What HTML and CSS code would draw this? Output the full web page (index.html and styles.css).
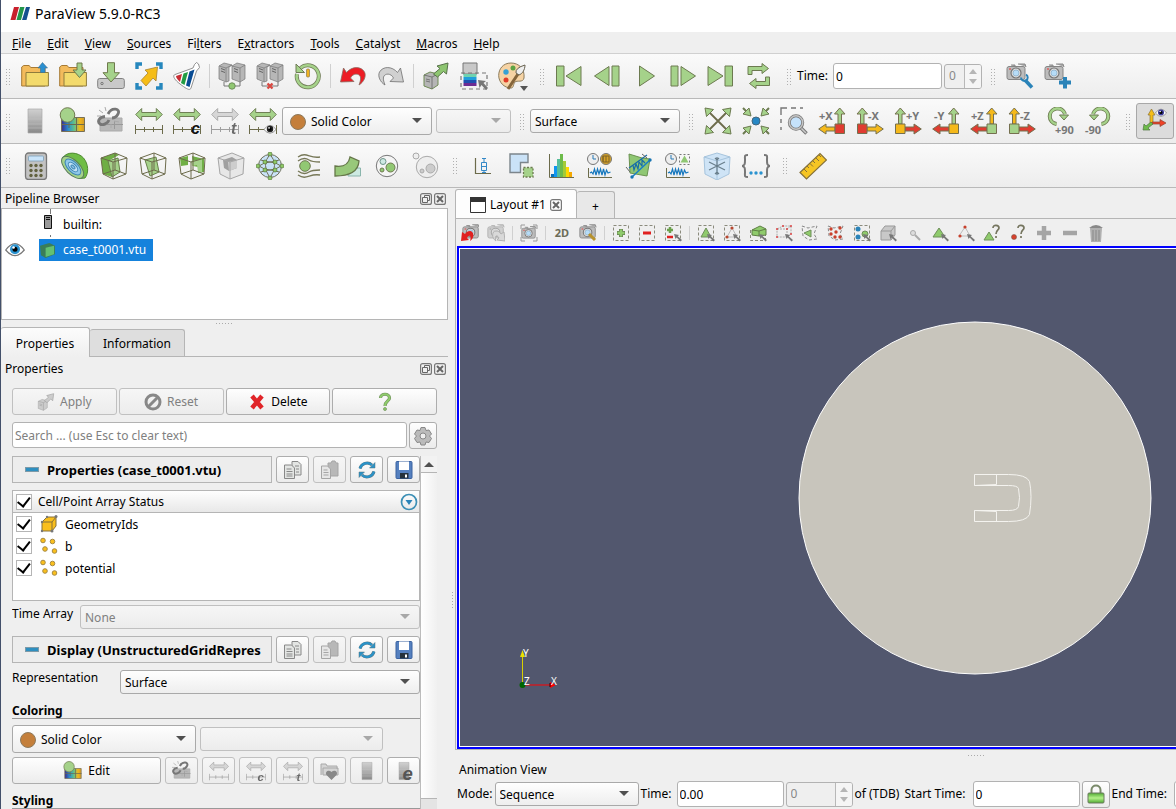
FILE: index.html
```html
<!DOCTYPE html>
<html lang="en">
<head>
<meta charset="utf-8">
<title>ParaView 5.9.0-RC3</title>
<link rel="stylesheet" href="styles.css">
</head>
<body>
<svg class="defs" aria-hidden="true">
<defs>
<linearGradient id="rainbow"><stop offset="0" stop-color="#3b2a8c"/><stop offset=".3" stop-color="#2c8fd0"/><stop offset=".55" stop-color="#5fc08a"/><stop offset=".8" stop-color="#f2b71c"/><stop offset="1" stop-color="#cf9a2a"/></linearGradient>
<linearGradient id="silver" x2="0" y2="1"><stop offset="0" stop-color="#d0d0d0"/><stop offset=".5" stop-color="#b0b0b0"/><stop offset="1" stop-color="#888"/></linearGradient>
<linearGradient id="lockfill" x2="0" y2="1"><stop offset="0" stop-color="#4faa32"/><stop offset=".5" stop-color="#b4f08a"/><stop offset="1" stop-color="#4faa32"/></linearGradient>
</defs>
<symbol id="open" viewBox="0 0 28 28"><path d="M.7 24V5l2-1.500h5.500l1.500 2H24V24z" fill="#f3bb5c" stroke="#a67a35"/><path d="M5 24V10.500h22.400V24z" fill="#f3da6c" stroke="#8f7c3c"/><path d="M21.500.500 17 6h2.500v4.500h4.500V6h2.500z" fill="#2a8fd0" stroke="#3f6f8f" stroke-width=".6"/></symbol>
<symbol id="openin" viewBox="0 0 28 28"><path d="M.7 24V5l2-1.500h5.500l1.500 2H24V24z" fill="#f3bb5c" stroke="#a67a35"/><path d="M5 24V10.500h22.400V24z" fill="#f3da6c" stroke="#8f7c3c"/><path d="M18 1h5v7h4l-6.500 7.500L14 8h4z" fill="#a5d28a" stroke="#6f7a4d"/></symbol>
<symbol id="save" viewBox="0 0 28 28"><rect x=".7" y="16.500" width="26.600" height="10" rx="2" fill="#c9c9c9" stroke="#808080"/><circle cx="5" cy="21.500" r="1.200" fill="none" stroke="#777"/><path d="M10.500.700h7v10h5L14 20 6 10.700h4.500z" fill="#a5d28a" stroke="#6f7a4d"/></symbol>
<symbol id="select" viewBox="0 0 28 28"><path d="M2 7V2h5M21 2h5v5M26 21v5h-5M7 26H2v-5" fill="none" stroke="#2687bd" stroke-width="3.400"/><path d="M22.500 5 10 8l3 3-7 7.500L11 24l7-8 3 3z" fill="#f5bd18" stroke="#a8822e" stroke-width=".8"/></symbol>
<symbol id="flask" viewBox="0 0 28 28"><path d="M20 6 2 12.500c-2.500 1-1.500 4.500 5 9.500s10 7 11 4L23.500 9l3-3.500-1-3.500-2-1.500-2 2z" fill="#fff" stroke="#777" stroke-width=".8"/><path d="m3 14 6-2-2 8c-2-2-4-4-4-6z" fill="#c82d34"/><path d="m10.500 11.500 4.500-1.500-3.500 13-3.500-2z" fill="#239c43"/><path d="m16.500 9.500 5-2L16.500 25l-3.500-1.500z" fill="#084b93"/></symbol>
<symbol id="server" viewBox="0 0 28 28"><g fill="#b7b7b7" stroke="#777" stroke-width=".7"><path d="m1 4 5-3 8 2-3 2v14l-3 1-7-3z"/><path d="m1 4 7 2v14M8 6l6-3"/><path d="m14 4 5-3 8 2v14l-5 3-8-3zM14 4l8 2v14M22 6l5-3"/></g><path d="M3 6.500 7 8M3 9l4 1.500M16 6.500 20 8M16 9l4 1.500" stroke="#666"/><path d="M6 20v4h16v-4" fill="none" stroke="#777"/></symbol>
<symbol id="clock" viewBox="0 0 28 28"><path d="M6.500 6a11 11 0 1 1-3.500 6" fill="none" stroke="#6f7a55" stroke-width="4"/><path d="M6.500 6a11 11 0 1 1-3.500 6" fill="none" stroke="#a5d28a" stroke-width="2.600"/><path d="M2 2v8.500h8.500z" fill="#a5d28a" stroke="#6f7a55"/><rect x="12.500" y="7" width="3" height="8" rx="1" fill="#f0b222" stroke="#8a7a4a" stroke-width=".7"/></symbol>
<symbol id="undo" viewBox="0 0 28 28"><path d="M4.500 6 1.500 20l13.500-.5-3.500-3.500C14 11 20 11 21.500 15c.5 3-.5 5-1.500 8 5-3 7.500-9 5.500-13C22 4 13 4 7.500 10.500z" fill="var(--f,#ed1c24)" stroke="#8a6a60" stroke-width=".8"/></symbol>
<symbol id="box" viewBox="0 0 28 28"><path d="m2 13 6-3 8 2v11l-6 4-8-3z" fill="#b5b5b5" stroke="#6f8a55"/><path d="m2 13 8 2v12M10 15l6-3M4 17l4 1M4 19l4 1" fill="none" stroke="#666" stroke-width=".8"/><path d="M26 1 15 4l3 2.500L11.500 12l4 3 6-5.500 3 2.500z" fill="#8ec571" stroke="#58724a"/></symbol>
<symbol id="selcolor" viewBox="0 0 28 28"><path d="M3 1h14v11H3z" fill="#c8c8c8" stroke="#777"/><path d="M3.500 12h13v3h-13z" fill="#6fd3b0"/><path d="M3.500 15h13v3h-13z" fill="#209edb"/><path d="M3.500 18h13v3h-13z" fill="#1c50b0"/><path d="M3.500 21h13v3h-13z" fill="#6c2b92"/><path d="M1 11h26v16H1z" fill="none" stroke="#777" stroke-width="1.200" stroke-dasharray="4 3"/><path d="m18 18 8 1-2.500 2L28 26l-2 2-4.500-5-2 3z" fill="#777"/></symbol>
<symbol id="palette" viewBox="0 0 28 28"><path d="M13 1C5 1 .7 7 .7 13.500S6 26 13 26c3 0 2-4 4-6s8 1 9-4C27 7 21 1 13 1z" fill="#f6d3a4" stroke="#8b7b5c"/><circle cx="15" cy="6" r="2.500" fill="#5da344"/><circle cx="8" cy="10" r="2.700" fill="#36a1d5"/><circle cx="8" cy="18" r="2.500" fill="#e03c28"/><path d="M10 27 22 9" stroke="#85653b" stroke-width="3"/><path d="M18 11q-1-5 9-8c0 5-3 9-6 10z" fill="#eee" stroke="#66604e"/></symbol>
<symbol id="first" viewBox="0 0 28 28"><path d="M1.500 4H9v20H1.500zM11 14 26 4.500v19z" fill="#a5d28a" stroke="#6c7a50"/></symbol>
<symbol id="prev" viewBox="0 0 28 28"><path d="M19 4h7v20h-7zM1.500 14 16 4.500v19z" fill="#a5d28a" stroke="#6c7a50"/></symbol>
<symbol id="play" viewBox="0 0 28 28"><path d="m8.500 4 15 10-15 10z" fill="#a5d28a" stroke="#6c7a50"/></symbol>
<symbol id="loop" viewBox="0 0 28 28"><path d="M3 12.500V4.500h14v-3l6.500 5-6.500 5v-3H7v4zM24.500 15v8.500H11v3l-6.500-5 6.500-5v3h9.500V15z" fill="#a5d28a" stroke="#6c7a50"/></symbol>
<symbol id="camera" viewBox="0 0 28 28"><path d="M5 3h4v2M12 2h7l1 3" fill="#aaa" stroke="#888"/><rect x="1" y="4.500" width="18" height="13" rx="2" fill="#bcbcbc" stroke="#858585"/><circle cx="10" cy="11" r="5" fill="#ddd" stroke="#777" stroke-width="1.200"/><circle cx="10" cy="11" r="3" fill="#b6dcf7" stroke="#7da2bd" stroke-width=".6"/><path d="M3 7h2" stroke="#e33"/></symbol>
<symbol id="bar" viewBox="0 0 28 28"><path d="M7 2h14v24H7z" fill="url(#silver)" stroke="#aaa" stroke-width=".7"/><path d="M7 12h14M7 17h14M7 21h14" stroke="#c5c5c5" stroke-width=".5"/></symbol>
<symbol id="cmap" viewBox="0 0 28 28"><path d="M2.500 10.500h23v14h-23z" fill="url(#rainbow)" stroke="#777056"/><path d="M3 17.500h23M10 14v7M17.500 11v13" stroke="#6b6a50"/><circle cx="8.500" cy="8" r="7.300" fill="#a5d28a" stroke="#6f7a50"/></symbol>
<symbol id="chain" viewBox="0 0 28 28"><path d="M3 11h22v13H3z" fill="#b8b8b8" stroke="#aaa"/><path d="M10 17.500h16M17.500 14v8" stroke="#999"/><path d="m2 3 4 3M8 0l1 4M0 9h4M17 14l5 1M14 17v4" stroke="#aaa"/><path d="M11 7c4-8 13-5 10 0-1 2-3 4-6 4M8 9.500c-6 .5-8 5-5 7.500 3 2 8-1 9-4" fill="none" stroke="#777" stroke-width="2.800"/></symbol>
<symbol id="range" viewBox="0 0 28 28"><path d="m.7 7.500 6-6v4h14.600v-4l6 6-6 6v-4H6.700v4z" fill="#a5d28a" stroke="#6f8055"/><path d="M.5 18v9M27.500 18v9M9.500 20v5M18.500 20v5M.5 22.500h27" fill="none" stroke="#6c6b4b"/></symbol>
<symbol id="eye" viewBox="0 0 28 28"><path d="M1 14q13-18 26 0-13 16-26 0z" fill="#fff" stroke="#777" stroke-width="1.700"/><circle cx="14" cy="13" r="7" fill="var(--iris,#222)"/><circle cx="14" cy="13" r="3.500" fill="#000"/><circle cx="12" cy="10.500" r="1.800" fill="#fff"/></symbol>
<symbol id="expand" viewBox="0 0 28 28"><path d="m4 4 20 20M24 4 4 24" stroke="#6c6b4b" stroke-width="1.800"/><path d="m1 1 8.500 1.500-7 7zM27 1l-8.500 1.500 7 7zM1 27l8.500-1.500-7-7zM27 27l-8.500-1.500 7-7z" fill="#a5d28a" stroke="#6c7a50"/></symbol>
<symbol id="shrink" viewBox="0 0 28 28"><path d="m1 1 4 4M27 1l-4 4M1 27l4-4M27 27l-4-4" stroke="#6c7a50" stroke-width="2"/><path d="M9 9 7 1 1 7zM19 9l2-8 6 6zM9 19l-2 8-6-6zM19 19l2 8 6-6z" fill="#a5d28a" stroke="#6c7a50"/><circle cx="14" cy="14" r="4" fill="#2687c4" stroke="#44667c"/></symbol>
<symbol id="zoombox" viewBox="0 0 28 28"><path d="M1 23v-3M1 16v-4M1 8V1h6M11 1h5M20 1h3" fill="none" stroke="#777" stroke-width="1.400"/><path d="m20 20 6.500 6.500" stroke="#777" stroke-width="3.500"/><path d="m20 20 6 6" stroke="#ccc" stroke-width="1.500"/><circle cx="16" cy="15.500" r="6.700" fill="#c5e2fb" stroke="#777" stroke-width="3"/><circle cx="16" cy="15.500" r="6.700" fill="none" stroke="#c5c5c5" stroke-width="1.500"/></symbol>
<symbol id="axes" viewBox="0 0 28 28"><path d="M20 17V7h-3.500L21.700 1 27 7h-3.500v10z" fill="var(--u)" stroke="#75704f"/><path d="M17 20H8v-3L.7 22 8 27v-3h9z" fill="var(--s)" stroke="#75704f"/><path d="M17 17h9.500v9.500H17z" fill="var(--b)" stroke="#75704f"/></symbol>
<symbol id="rotate" viewBox="0 0 28 28"><path d="M10.500 17A7.800 7.800 0 1 1 19 7" fill="none" stroke="#6c7a50" stroke-width="4"/><path d="M10.500 17A7.800 7.800 0 1 1 19 7" fill="none" stroke="#a5d28a" stroke-width="2.400"/><path d="M13.500 8h9L18 13z" fill="#a5d28a" stroke="#6c7a50"/></symbol>
<symbol id="triad" viewBox="0 0 28 28"><path d="M9 17V8H7l3.500-6L14 8h-2v9z" fill="#f5bd18" stroke="#8b7237" stroke-width=".7"/><path d="M11 15h8v-2.500l6 3.500-6 3.500V17h-8z" fill="#ef4126" stroke="#8b4637" stroke-width=".7"/><path d="m12 17-5 4 2 2H2l1-6 2 2 5-4z" fill="#6dbb4a" stroke="#507540" stroke-width=".7"/></symbol>
<symbol id="calc" viewBox="0 0 28 28"><rect x="3.500" y="1" width="21" height="26.500" rx="3" fill="#c2c2c2" stroke="#777" stroke-width="1.300"/><rect x="6.500" y="4" width="15" height="5" rx="1" fill="#c9e4fa" stroke="#7da0b8" stroke-width=".8"/><g fill="#62623f"><circle cx="9" cy="13.500" r="1.700"/><circle cx="14" cy="13.500" r="1.700"/><circle cx="19" cy="13.500" r="1.700"/><circle cx="9" cy="18.500" r="1.700"/><circle cx="14" cy="18.500" r="1.700"/><circle cx="19" cy="18.500" r="1.700"/><circle cx="9" cy="23.500" r="1.700"/><circle cx="14" cy="23.500" r="1.700"/><circle cx="19" cy="23.500" r="1.700"/></g></symbol>
<symbol id="contour" viewBox="0 0 28 28"><path d="M1.500 6C6-1 17 0 22.500 6c5 6 5.500 15 1.500 20l-5 .5z" fill="#6fbd45" stroke="#4f8a32"/><g transform="rotate(45 12 15)" stroke="#577a5a"><ellipse cx="12" cy="15.500" rx="14" ry="7" fill="#a5d28a"/><ellipse cx="12" cy="15" rx="10" ry="5" fill="#8fc8ea" stroke="#3f88b5"/><ellipse cx="12" cy="15" rx="6" ry="3" fill="#c3e2f6" stroke="#3f88b5"/><ellipse cx="12" cy="15" rx="2.500" ry="1.200" fill="#8fc5e8" stroke="#3f88b5"/></g></symbol>
<symbol id="cube" viewBox="0 0 28 28"><g fill="none" stroke="#6c6b4b"><path d="m1 6 14-5 12 5-14 4zM1 6l2 16 10 5V10M27 6l-1 16-13 5M15 1v17l11 4M15 18 3 22"/></g></symbol>
<symbol id="clip" viewBox="0 0 28 28"><path d="m1 6 14-5 4 2-9 5 2 17-9-3z" fill="#6fae45"/><path d="m8 9 10-3 2 14-8 5z" fill="#a5d28a" stroke="#67814a"/><use href="#cube"/></symbol>
<symbol id="slice" viewBox="0 0 28 28"><path d="m6 8 11-3 3 15-9 4z" fill="#a5d28a" stroke="#67814a"/><use href="#cube"/></symbol>
<symbol id="threshold" viewBox="0 0 28 28"><path d="m2 6 8-2v9l-7 1zM14 4l12 3v13l-6 1v-6l-5-1z" fill="#6fae45"/><path d="m13 9 11-2v13h-4l-1-7-5 1z" fill="#a5d28a"/><use href="#cube"/></symbol>
<symbol id="subset" viewBox="0 0 28 28"><path d="m1 6 14-5 12 5v16l-14 5-10-5z" fill="#e7e7e7"/><path d="m6 8 9-3 5 3v8l-8 3-5-3z" fill="#a0a0a0"/><path d="m11 10 9-2v8l-8 3z" fill="#cdcdcd"/><path d="m1 6 14-5 12 5-14 4zM1 6l2 16 10 5V10M27 6l-1 16-13 5" fill="none" stroke="#a6a6a6"/></symbol>
<symbol id="glyph" viewBox="0 0 28 28"><circle cx="14" cy="14" r="11.500" fill="#c9e2f7" stroke="#6f705a"/><path d="M3 14q11-8 22 0-11 8-22 0M14 2q-9 11 0 24M14 2q9 11 0 24M5 8q9 4 18 0M5 20q9-4 18 0" fill="none" stroke="#6f7055"/><g fill="#8ecb66" stroke="#56733e" stroke-width=".7"><circle cx="14" cy="2" r="2"/><circle cx="14" cy="26" r="2"/><circle cx="2" cy="14" r="2"/><circle cx="26" cy="14" r="2"/><circle cx="9" cy="10" r="2"/><circle cx="19" cy="10" r="2"/><circle cx="9" cy="18" r="2"/><circle cx="19" cy="18" r="2"/></g></symbol>
<symbol id="stream" viewBox="0 0 28 28"><g fill="none" stroke="#777858" stroke-width="1.300"><path d="M3 5c9-6 11 2 22 0M3 9c4-3 8-3 11-1s6 2 11 2M3 23c9 6 11-2 22 0M3 19c4 3 8 3 11 1s6-2 11-2"/></g><circle cx="10" cy="14" r="5.300" fill="#91c873" stroke="#6f7a50"/></symbol>
<symbol id="warp" viewBox="0 0 28 28"><path d="M14 16h12.500v8H14z" fill="#cdeae2" stroke="#8ab5ac"/><path d="M1 14q13 2 15-9l9 4q-1 15-24 15z" fill="#98c87a" stroke="#657749" stroke-width="1.300"/></symbol>
<symbol id="group" viewBox="0 0 28 28"><circle cx="14" cy="14" r="10.700" fill="#f5f5f5" stroke="#777"/><circle cx="10" cy="9.500" r="3" fill="#cde9e2" stroke="#6e9489"/><circle cx="17.500" cy="15.500" r="4.500" fill="#91c873" stroke="#6f7a50"/><circle cx="9" cy="18" r="2" fill="#91c873" stroke="#6f7a50"/></symbol>
<symbol id="group2" viewBox="0 0 28 28"><g fill="#eee" stroke="#aaa"><circle cx="15" cy="15" r="10.700"/><circle cx="4" cy="4" r="3"/><circle cx="18.500" cy="16.500" r="4.500" fill="#ccc"/><circle cx="10" cy="19" r="2" fill="#ccc"/></g></symbol>
<symbol id="plot" viewBox="0 0 28 28"><path d="M6.500 6v15.500H22" fill="none" stroke="#6c6b4b" stroke-width="1.200"/><path d="M12.500 10.500h5v8h-5zM15 7v3M15 18v3M13 6.500h4M12.500 14.500h5M13 20.500h4" fill="none" stroke="#3388c7"/></symbol>
<symbol id="lshape" viewBox="0 0 28 28"><path d="M2 2h18v8.500h-7.500v10H2z" fill="#cae2f7" stroke="#7c858c" stroke-width="1.400"/><path d="M15.500 15.500h9.500v9.500h-9.500z" fill="#a5d28a" stroke="#6c7a50" stroke-dasharray="2 1.500" stroke-width="1.300"/></symbol>
<symbol id="hist" viewBox="0 0 28 28"><path d="M2.500 2v23.500H27" fill="none" stroke="#6c6b4b"/><path d="M4 22h3v3H4z" fill="#0870b8"/><path d="M7 14h3v11H7z" fill="#1195f0"/><path d="M10 7h3v18h-3z" fill="#55bd9b"/><path d="M13 2h3v23h-3z" fill="#6dbb4a"/><path d="M16 9h3v16h-3z" fill="#a5cb36"/><path d="M19 15h3v10h-3z" fill="#ffd800"/><path d="M22 20h3v5h-3z" fill="#f5a800"/></symbol>
<symbol id="wave" viewBox="0 0 28 28"><circle cx="7" cy="7" r="5.500" fill="#eee" stroke="#777"/><path d="M7 3v4h3" fill="none" stroke="#2678b5"/><path d="M2.500 16v9.500H26" fill="none" stroke="#6c6b4b"/><path d="m4 21 1.500-1 1.500 2 1.500-5 1.500 6 1.500-6 1.500 5 1.500-5 1.500 6 1.500-6 1.500 6 1.500-5 1.500 3 2.500-1" fill="none" stroke="#1678be" stroke-width="1.200"/></symbol>
<symbol id="line" viewBox="0 0 28 28"><path d="m4 2 13 4 8 1-3 17-17-3z" fill="#8fc773" stroke="#6a9250"/><path d="m4 16 18-13M8 13l1 5 2-6 2 5 1-7 3 4 0-6 3 3" fill="none" stroke="#176ca8" stroke-width="1.200"/><path d="m7 25 18-17" stroke="#177fc5" stroke-width="1.500"/><circle cx="7" cy="25" r="1.700" fill="#1774b3"/><circle cx="25" cy="8" r="1.700" fill="#1774b3"/><path d="m1 15 4 5M17 2l5 4" stroke="#666"/></symbol>
<symbol id="freeze" viewBox="0 0 28 28"><path d="m1 5 13-4 13 4-1 17-12 6-12-6z" fill="#cfe4f6" stroke="#a6c4dd"/><path d="m1 5 13 4 13-4M14 9v19" fill="none" stroke="#a6c4dd"/><path d="M14 5v18M6 10l16 8M22 10 6 18M12 6l2 2 2-2M12 22l2-2 2 2" fill="none" stroke="#697e8b" stroke-width="1.200"/></symbol>
<symbol id="braces" viewBox="0 0 28 28"><path d="M6 3c-4 0-3 1-3 5 0 4 0 5-3 6 3 1 3 2 3 6s-1 5 3 5M22 3c4 0 3 1 3 5 0 4 0 5 3 6-3 1-3 2-3 6s1 5-3 5" fill="none" stroke="#777" stroke-width="2"/><g fill="#2a93d0"><circle cx="9" cy="21" r="1.700"/><circle cx="14" cy="21" r="1.700"/><circle cx="19" cy="21" r="1.700"/></g></symbol>
<symbol id="ruler" viewBox="0 0 28 28"><path d="m1 20.500 20-19L27.500 8 7.500 27z" fill="#f6c524" stroke="#85713a" stroke-width="1.200"/><path d="m5 17 3 3M8 14l2 2M11 11.500l3 3M14 9l2 2M17 6l3 3M20 3l2 2" stroke="#85713a"/></symbol>
<symbol id="float" viewBox="0 0 12 12"><rect x=".6" y=".6" width="10.800" height="10.800" rx="2" fill="none" stroke="#777" stroke-width="1.200"/><path d="M4.500 4.500v-2h5v5h-2M2.500 4.500h5v5h-5z" fill="none" stroke="#666"/></symbol>
<symbol id="close" viewBox="0 0 12 12"><rect x=".6" y=".6" width="10.800" height="10.800" rx="2" fill="none" stroke="#777" stroke-width="1.200"/><path d="m3 3 6 6M9 3 3 9" stroke="#666" stroke-width="2"/></symbol>
<symbol id="copy" viewBox="0 0 20 20"><g fill="#e3e5e3" stroke="#888"><path d="M9 1.500h6l3 3V15H9z"/><path d="M1.500 5h7l3 3v10.500h-10z"/><path d="M3.500 9h5M3.500 11.500h6M3.500 14h6M3.500 16h6M12 6h4M13 9h3M13 12h3"/></g></symbol>
<symbol id="paste" viewBox="0 0 20 20"><path d="M8 3h3l1-2h3l1 2h2v13H8z" fill="#b8b8b8" stroke="#a5a5a5"/><path d="M1.500 6h6l3 3v9.500h-9z" fill="#e6e6e6" stroke="#a5a5a5"/><path d="M3.500 10h4M3.500 12.500h5M3.500 15h5" stroke="#a5a5a5"/></symbol>
<symbol id="refresh" viewBox="0 0 20 20"><path d="M3 8.500A7.300 7.300 0 0 1 15 5M17 11.500A7.300 7.300 0 0 1 5 15" fill="none" stroke="#5b747f" stroke-width="3"/><path d="M3 8.500A7.300 7.300 0 0 1 15 5M17 11.500A7.300 7.300 0 0 1 5 15" fill="none" stroke="#2a93c8" stroke-width="2.200"/><path d="M18 2.500V8h-5.500zM2 17.500V12h5.500z" fill="#2a93c8" stroke="#5b747f" stroke-width=".5"/></symbol>
<symbol id="disk" viewBox="0 0 20 20"><rect x="2" y="1.500" width="16" height="17" rx="1" fill="#5580bf" stroke="#3a62a0"/><path d="M5 1.500h10V10H5z" fill="#fff"/><path d="M6 13h8.500v5.500H6z" fill="#26323c"/><path d="M11 14.500h2v3h-2z" fill="#fff"/></symbol>
<symbol id="pts" viewBox="0 0 18 18"><g fill="#fabf1c" stroke="#a68a43"><circle cx="3" cy="3.500" r="2.300"/><circle cx="12.500" cy="4.500" r="2.300"/><circle cx="5" cy="12" r="2.300"/><circle cx="14.500" cy="14" r="2.300"/></g></symbol>
<symbol id="cell" viewBox="0 0 18 18"><path d="m2 7 5-5h9v9l-4 5H2z" fill="#fabf1c" stroke="#85713a"/><path d="M2 7h10v9M12 7l4-5" fill="none" stroke="#85713a"/><g fill="#777"><circle cx="2" cy="7" r="1.200"/><circle cx="7" cy="2" r="1.200"/><circle cx="16" cy="1.500" r="1.500"/><circle cx="2" cy="16" r="1.200"/><circle cx="12" cy="16" r="1.500"/></g></symbol>
<symbol id="dash" viewBox="0 0 18 18"><path d="M1.500 1.500h15v15h-15z" fill="none" stroke="#8b8b7d" stroke-dasharray="3 2"/></symbol>
<symbol id="ptr" viewBox="0 0 18 18"><path d="m10 10 5 1-1.300 1.300L18 16l-1.500 1.500-3.800-4L11.500 15z" fill="#777"/></symbol>
</svg>

<header class="titlebar">
<svg width="20" height="14" viewBox="0 0 20 14"><path d="M4 0h5L5.500 13h-5z" fill="#c8202c"/><path d="M10 0h4.500L11 13H6.500z" fill="#23964a"/><path d="M16 0h4l-3.500 13H12z" fill="#15508f"/></svg>
<h1>ParaView 5.9.0-RC3</h1>
</header>
<nav class="menubar">
<a href="#"><u>F</u>ile</a><a href="#"><u>E</u>dit</a><a href="#"><u>V</u>iew</a><a href="#"><u>S</u>ources</a><a href="#">Fi<u>l</u>ters</a><a href="#">E<u>x</u>tractors</a><a href="#"><u>T</u>ools</a><a href="#"><u>C</u>atalyst</a><a href="#"><u>M</u>acros</a><a href="#"><u>H</u>elp</a>
</nav>

<div class="toolbar">
<i class="handle"></i>
<button class="tool" aria-label="Open"><svg><use href="#open"/></svg></button>
<button class="tool" aria-label="Load state"><svg><use href="#openin"/></svg></button>
<button class="tool" aria-label="Save data"><svg><use href="#save"/></svg></button>
<button class="tool" aria-label="Extract selection"><svg><use href="#select"/></svg></button>
<button class="tool" aria-label="Catalyst"><svg><use href="#flask"/></svg></button>
<i class="sep"></i>
<button class="tool" aria-label="Connect"><svg><use href="#server"/><circle cx="14" cy="24" r="3.200" fill="#91c873" stroke="#6f8f5c"/></svg></button>
<button class="tool" aria-label="Disconnect"><svg><use href="#server"/><path d="m11.500 21.500 5 5M16.500 21.500l-5 5" stroke="#d94a43" stroke-width="2.400"/></svg></button>
<button class="tool" aria-label="Reset session"><svg><use href="#clock"/></svg></button>
<i class="sep"></i>
<button class="tool" aria-label="Undo"><svg><use href="#undo"/></svg></button>
<button class="tool" aria-label="Redo" disabled><svg class="redo"><g transform="matrix(-1 0 0 1 28 0)"><use href="#undo"/></g></svg></button>
<i class="sep"></i>
<button class="tool" aria-label="Auto apply"><svg><use href="#box"/></svg></button>
<button class="tool" aria-label="Find data"><svg><use href="#selcolor"/></svg></button>
<button class="tool drop" aria-label="Color palette"><svg><use href="#palette"/></svg></button>
<i class="handle"></i>
<button class="tool" aria-label="First frame"><svg><use href="#first"/></svg></button>
<button class="tool" aria-label="Previous frame"><svg><use href="#prev"/></svg></button>
<button class="tool" aria-label="Play"><svg><use href="#play"/></svg></button>
<button class="tool" aria-label="Next frame"><svg><g transform="matrix(-1 0 0 1 28 0)"><use href="#prev"/></g></svg></button>
<button class="tool" aria-label="Last frame"><svg><g transform="matrix(-1 0 0 1 27 0)"><use href="#first"/></g></svg></button>
<button class="tool" aria-label="Loop"><svg><use href="#loop"/></svg></button>
<i class="handle"></i>
<label class="lbl time" for="time">Time:</label><input class="field timebox" id="time" value="0">
<span class="spin small"><input value="0" disabled aria-label="Time step"><i></i></span>
<i class="handle"></i>
<button class="tool" aria-label="Adjust camera"><svg><use href="#camera"/><path d="m19 18 7 7.500" stroke="#2a83b8" stroke-width="3.600"/><path d="M15 15.500a3.500 3.500 0 0 0 5 3 3.500 3.500 0 0 0 0-6" fill="none" stroke="#2a83b8" stroke-width="2"/></svg></button>
<button class="tool" aria-label="Add camera link"><svg><use href="#camera"/><path d="M15 20.500h12M21 15v11.500" stroke="#2a83b8" stroke-width="4"/></svg></button>
</div>

<div class="toolbar">
<i class="handle"></i>
<button class="tool" aria-label="Color legend"><svg><use href="#bar"/></svg></button>
<button class="tool" aria-label="Edit color map"><svg><use href="#cmap"/></svg></button>
<button class="tool" aria-label="Separate color map"><svg><use href="#chain"/></svg></button>
<button class="tool" aria-label="Rescale to data range"><svg><use href="#range"/></svg></button>
<button class="tool" aria-label="Rescale to custom range"><svg><use href="#range"/><text class="badge" x="18" y="27">c</text></svg></button>
<button class="tool" aria-label="Rescale over time" disabled><svg class="fade"><use href="#range"/><text class="badge" x="20" y="27">t</text></svg></button>
<button class="tool" aria-label="Rescale to visible range"><svg><use href="#range"/><use href="#eye" x="14" y="16" width="14" height="13"/></svg></button>
<span class="combo big dot c-color"><select aria-label="Color by"><option>Solid Color</option></select></span>
<span class="combo off c-comp"><select aria-label="Component" disabled><option></option></select></span>
<i class="handle"></i>
<span class="combo c-rep"><select aria-label="Representation style"><option>Surface</option></select></span>
<i class="handle"></i>
<button class="tool" aria-label="Reset camera"><svg><use href="#expand"/></svg></button>
<button class="tool" aria-label="Zoom to data"><svg><use href="#shrink"/></svg></button>
<button class="tool" aria-label="Zoom to box"><svg><use href="#zoombox"/></svg></button>
<button class="tool" aria-label="View +X"><svg class="yx"><use href="#axes"/><text class="ax" x="1" y="13">+X</text></svg></button>
<button class="tool" aria-label="View -X"><svg class="yx"><g transform="matrix(-1 0 0 1 28 0)"><use href="#axes"/></g><text class="ax" x="12" y="13">-X</text></svg></button>
<button class="tool" aria-label="View +Y"><svg class="xy"><g transform="matrix(-1 0 0 1 28 0)"><use href="#axes"/></g><text class="ax" x="12" y="13">+Y</text></svg></button>
<button class="tool" aria-label="View -Y"><svg class="xy"><use href="#axes"/><text class="ax" x="2" y="13">-Y</text></svg></button>
<button class="tool" aria-label="View +Z"><svg class="xz"><use href="#axes"/><text class="ax" x="1" y="13">+Z</text></svg></button>
<button class="tool" aria-label="View -Z"><svg class="xz"><g transform="matrix(-1 0 0 1 28 0)"><use href="#axes"/></g><text class="ax" x="12" y="13">-Z</text></svg></button>
<button class="tool" aria-label="Rotate +90"><svg><use href="#rotate"/><text class="ax deg" x="9" y="27">+90</text></svg></button>
<button class="tool" aria-label="Rotate -90"><svg><g transform="matrix(-1 0 0 1 28 0)"><use href="#rotate"/></g><text class="ax deg" x="1" y="27">-90</text></svg></button>
<i class="handle"></i>
<button class="tool pressed" aria-label="Show orientation axes"><svg><use href="#triad"/><use class="iris" href="#eye" x="13" y="0" width="14" height="12"/></svg></button>
</div>

<div class="toolbar wide">
<i class="handle"></i>
<button class="tool" aria-label="Calculator"><svg><use href="#calc"/></svg></button>
<button class="tool" aria-label="Contour"><svg><use href="#contour"/></svg></button>
<button class="tool" aria-label="Clip"><svg><use href="#clip"/></svg></button>
<button class="tool" aria-label="Slice"><svg><use href="#slice"/></svg></button>
<button class="tool" aria-label="Threshold"><svg><use href="#threshold"/></svg></button>
<button class="tool" aria-label="Extract subset"><svg><use href="#subset"/></svg></button>
<button class="tool" aria-label="Glyph"><svg><use href="#glyph"/></svg></button>
<button class="tool" aria-label="Stream tracer"><svg><use href="#stream"/></svg></button>
<button class="tool" aria-label="Warp by vector"><svg><use href="#warp"/></svg></button>
<button class="tool" aria-label="Group datasets"><svg><use href="#group"/></svg></button>
<button class="tool" aria-label="Extract group"><svg><use href="#group2"/></svg></button>
<i class="handle"></i>
<button class="tool" aria-label="Plot quartile"><svg><use href="#plot"/></svg></button>
<button class="tool" aria-label="Extract selection"><svg><use href="#lshape"/></svg></button>
<button class="tool" aria-label="Histogram"><svg><use href="#hist"/></svg></button>
<button class="tool" aria-label="Plot data over time"><svg><use href="#wave"/><circle cx="20" cy="7" r="5.500" fill="#d6a32a" stroke="#777"/><path d="M17 4h6v6h-6zM17 4v6M20 4v6" fill="none" stroke="#7d6328"/></svg></button>
<button class="tool" aria-label="Plot over line"><svg><use href="#line"/></svg></button>
<button class="tool" aria-label="Plot selection over time"><svg><use href="#wave"/><path d="M15.500 2.500h10v10h-10z" fill="none" stroke="#777" stroke-dasharray="2 2"/><path d="m20.500 3.500 4 7h-8z" fill="#8fc773"/></svg></button>
<button class="tool" aria-label="Probe location"><svg><use href="#freeze"/></svg></button>
<button class="tool" aria-label="Programmable filter"><svg><use href="#braces"/></svg></button>
<i class="handle"></i>
<button class="tool" aria-label="Ruler"><svg><use href="#ruler"/></svg></button>
</div>

<main class="main">
<aside class="side">
<div class="docktitle"><span>Pipeline Browser</span><button aria-label="Float"><svg><use href="#float"/></svg></button><button aria-label="Close"><svg><use href="#close"/></svg></button></div>
<ul class="pipeline">
<li><span class="vis"></span><svg class="node" viewBox="0 0 16 28"><path d="M11.500 0v5M11.500 26v2" stroke="#777"/><path d="M5.500 6.500h7v13h-7z" fill="#999" stroke="#111"/><path d="M7 8.500h4M7 10.500h4" stroke="#111"/></svg><span class="name">builtin:</span></li>
<li><span class="vis"><svg width="20" height="16" viewBox="0 0 28 22"><use class="blue" href="#eye" y="-3" width="28" height="28"/></svg></span><span class="sel"><svg viewBox="0 0 16 16"><path d="m0 3 10-3 6 3v9l-10 4-5-3z" fill="#3a7d58"/><path d="m6 5 9-2v9l-9 3z" fill="#63c072"/></svg><span>case_t0001.vtu</span></span></li>
</ul>
<div class="grip"></div>
<div class="tabs"><button class="tab on">Properties</button><button class="tab">Information</button></div>
<div class="docktitle second"><span>Properties</span><button aria-label="Float"><svg><use href="#float"/></svg></button><button aria-label="Close"><svg><use href="#close"/></svg></button></div>
<div class="actions">
<button class="btn" disabled><svg class="fade" viewBox="0 0 28 28"><use href="#box"/></svg>Apply</button>
<button class="btn" disabled><svg viewBox="0 0 18 18"><circle cx="9" cy="9" r="7" fill="none" stroke="#888" stroke-width="3"/><path d="m4 14 10-10" stroke="#888" stroke-width="3"/></svg>Reset</button>
<button class="btn"><svg viewBox="0 0 18 18"><path d="m4 3 10 12M14 3 4 15" stroke="#e02428" stroke-width="4.500"/></svg>Delete</button>
<button class="btn" aria-label="Help"><svg viewBox="0 0 18 18"><path d="M4.500 5c0-5 9-5 9 0 0 3-4.500 3-4.500 8" fill="none" stroke="#6f8f5a" stroke-width="3.200"/><path d="M4.500 5c0-5 9-5 9 0 0 3-4.500 3-4.500 8" fill="none" stroke="#8fcb6c" stroke-width="2"/><circle cx="9" cy="16" r="1.500" fill="#8fcb6c" stroke="#6f8f5a" stroke-width=".7"/></svg></button>
</div>
<div class="search"><input class="field" placeholder="Search ... (use Esc to clear text)" aria-label="Search"><button class="btn" aria-label="Advanced properties"><svg viewBox="0 0 20 20"><path d="m8 1.500h4l1 3 3-.5 2.500 4L16.500 10l2 2.500-2.500 4-3-.5-1 3H8l-1-3-3 .5-2.500-4L3.500 10l-2-2 2.500-4 3 .5z" fill="#bbb" stroke="#888"/><circle cx="10" cy="10" r="3" fill="#eee" stroke="#888"/></svg></button></div>
<div class="scroll">
<div class="form">
<div class="section"><button class="head"><i></i><span>Properties (case_t0001.vtu)</span></button><button class="btn sq" aria-label="Copy"><svg><use href="#copy"/></svg></button><button class="btn sq" disabled aria-label="Paste"><svg><use href="#paste"/></svg></button><button class="btn sq" aria-label="Restore defaults"><svg><use href="#refresh"/></svg></button><button class="btn sq" aria-label="Save defaults"><svg><use href="#disk"/></svg></button></div>
<div class="arrays">
<div class="arow ahead"><input type="checkbox" checked id="a0"><label for="a0">Cell/Point Array Status</label><svg class="filter" viewBox="0 0 18 18"><circle cx="9" cy="9" r="7.500" fill="none" stroke="#3c8fb5" stroke-width="1.700"/><path d="M5.500 7h7L9 12z" fill="#2a83b8"/></svg></div>
<div class="arow"><input type="checkbox" checked id="a1"><svg><use href="#cell"/></svg><label for="a1">GeometryIds</label></div>
<div class="arow"><input type="checkbox" checked id="a2"><svg><use href="#pts"/></svg><label for="a2">b</label></div>
<div class="arow"><input type="checkbox" checked id="a3"><svg><use href="#pts"/></svg><label for="a3">potential</label></div>
</div>
<div class="row ta"><label for="ta">Time Array</label><span class="combo off"><select id="ta" disabled><option>None</option></select></span></div>
<div class="section"><button class="head"><i></i><span>Display (UnstructuredGridRepres</span></button><button class="btn sq" aria-label="Copy"><svg><use href="#copy"/></svg></button><button class="btn sq" disabled aria-label="Paste"><svg><use href="#paste"/></svg></button><button class="btn sq" aria-label="Restore defaults"><svg><use href="#refresh"/></svg></button><button class="btn sq" aria-label="Save defaults"><svg><use href="#disk"/></svg></button></div>
<div class="row rep"><label for="rp">Representation</label><span class="combo"><select id="rp"><option>Surface</option></select></span></div>
<h2>Coloring</h2>
<div class="colorby"><span class="combo big dot"><select aria-label="Coloring array"><option>Solid Color</option></select></span><span class="combo off"><select aria-label="Coloring component" disabled><option></option></select></span></div>
<div class="colorbtns"><button class="btn edit"><svg viewBox="0 0 28 28"><use href="#cmap"/></svg>Edit</button><button class="btn sq" disabled aria-label="Separate color map"><svg viewBox="0 0 28 28"><use href="#chain"/></svg></button><button class="btn sq" disabled aria-label="Rescale"><svg class="fade" viewBox="0 0 28 28"><use href="#range"/></svg></button><button class="btn sq" disabled aria-label="Rescale custom"><svg class="fade" viewBox="0 0 28 28"><use href="#range"/><text class="badge" x="16" y="28">c</text></svg></button><button class="btn sq" disabled aria-label="Rescale temporal"><svg class="fade" viewBox="0 0 28 28"><use href="#range"/><text class="badge" x="19" y="28">t</text></svg></button><button class="btn sq" disabled aria-label="Presets"><svg viewBox="0 0 20 20"><path d="M1 14V3h5l1 2h10v3M3 14V7h15v7z" fill="#d5d5d5" stroke="#aaa"/><path d="m11.500 19-5-5c-2-3 2-6 5-3 3-3 7 0 5 3z" fill="#888"/></svg></button><button class="btn sq" disabled aria-label="Legend"><svg viewBox="0 0 28 28"><use href="#bar"/></svg></button><button class="btn sq" aria-label="Edit legend"><svg viewBox="0 0 28 28"><use href="#bar"/><text class="badge e" x="12" y="27">e</text></svg></button></div>
<h2>Styling</h2>
</div>
<div class="vbar"><button aria-label="Scroll up"></button><i></i></div>
</div>
</aside>
<div class="splitter"></div>
<section class="center">
<div class="ltabs"><div class="ltab on"><svg width="16" height="16" viewBox="0 0 16 16"><path d="M.5.500h15v15H.5z" fill="#fff" stroke="#333"/><path d="M0 0h16v5H0z" fill="#333"/></svg><span>Layout #1</span><button aria-label="Close layout"><svg><use href="#close"/></svg></button></div><button class="ltab">+</button></div>
<div class="pane">
<div class="viewbar">
<button aria-label="Undo camera"><svg viewBox="0 0 18 18"><use href="#camera" width="24" height="24" x="1" y="-1"/><path d="m1 8-1 9 8-1-2-2c2-4 5-2 3 3 5-3 4-10 0-10-2 0-4 1-5 3z" fill="#e02020"/></svg></button>
<button disabled aria-label="Redo camera"><svg class="fade" viewBox="0 0 18 18"><use href="#camera" width="24" height="24" y="-1"/><path d="m17 8 1 9-8-1 2-2c-2-4-5-2-3 3-5-3-4-10 0-10 2 0 4 1 5 3z" fill="#ccc" stroke="#888"/></svg></button>
<i class="sep"></i>
<button aria-label="Capture"><svg viewBox="0 0 18 18"><path d="M1 5V1h4M13 1h4v4M17 13v4h-4M5 17H1v-4" fill="none" stroke="#999"/><use href="#camera" width="21" height="21" x="1" y="1"/></svg></button>
<i class="sep"></i>
<button class="two">2D</button>
<button aria-label="Zoom"><svg viewBox="0 0 18 18"><use href="#camera" width="24" height="24" y="-1"/><path d="m10 10 6 6" stroke="#b8922c" stroke-width="3"/></svg></button>
<i class="sep"></i>
<button aria-label="Add selection"><svg><use href="#dash"/><path d="M5 9h8M9 5v8" stroke="#678152" stroke-width="4"/><path d="M5.500 9h7M9 5.500v7" stroke="#8fcb6c" stroke-width="2.500"/></svg></button>
<button aria-label="Subtract selection"><svg><use href="#dash"/><path d="M5 9h8" stroke="#e02020" stroke-width="3"/></svg></button>
<button aria-label="Toggle selection"><svg><use href="#dash"/><path d="M3 6h6M6 3v6" stroke="#6aa04b" stroke-width="2.500"/><path d="M3 13h6" stroke="#e02020" stroke-width="2.500"/><use href="#ptr"/></svg></button>
<i class="sep"></i>
<button aria-label="Select cells"><svg><use href="#dash"/><path d="m9 4 5 9H4z" fill="#8fcb6c" stroke="#6f8f5a"/><use href="#ptr"/></svg></button>
<button aria-label="Select points"><svg><use href="#dash"/><path d="m9 4 5 9H4z" fill="none" stroke="#bbb"/><g fill="#b8472f"><circle cx="9" cy="4" r="1.600"/><circle cx="4" cy="13" r="1.600"/></g><use href="#ptr"/></svg></button>
<button aria-label="Select cells through"><svg><path d="M1.500 6v10.500h15V11" fill="none" stroke="#8b8b7d" stroke-dasharray="3 2"/><path d="m3 6 8-4 6 3v6l-7 1-7-1z" fill="#8fcb6c" stroke="#5f7f45"/><path d="m3 6 7 1 7-2M10 7v5" fill="none" stroke="#5f7f45"/><use href="#ptr"/></svg></button>
<button aria-label="Select points through"><svg><path d="m2 5 6-3h8v8l-4 3H2zM2 5h10v8M12 5l4-3" fill="none" stroke="#aaa" stroke-dasharray="2 1"/><g fill="#d44"><circle cx="2" cy="5" r="1"/><circle cx="8" cy="2" r="1"/><circle cx="16" cy="2" r="1"/><circle cx="12" cy="5" r="1"/><circle cx="2" cy="13" r="1"/><circle cx="16" cy="10" r="1"/></g><use href="#ptr"/></svg></button>
<button aria-label="Polygon cells"><svg><path d="m1 2 6 2 9-2-3 8 3 5-8 1-6-4z" fill="none" stroke="#888" stroke-dasharray="3 2"/><path d="m3 9 7-3v7z" fill="#8fcb6c" stroke="#6f8f5a"/></svg></button>
<button aria-label="Polygon points"><svg><path d="m1 2 6 2 9-2-3 8 3 5-8 1-6-4z" fill="none" stroke="#888" stroke-dasharray="3 2"/><g fill="#c8402c"><circle cx="4" cy="5" r="1.700"/><circle cx="9" cy="8" r="1.700"/><circle cx="13" cy="4" r="1.700"/><circle cx="4" cy="10" r="1.700"/><circle cx="8" cy="13" r="1.700"/><circle cx="13" cy="13" r="1.700"/></g></svg></button>
<button aria-label="Select blocks"><svg><use href="#dash"/><circle cx="5" cy="5" r="2.500" fill="#2a83b8"/><circle cx="5" cy="13" r="2.500" fill="#2a83b8"/><circle cx="12" cy="10" r="3" fill="#8fcb6c" stroke="#6f8f5a"/><use href="#ptr"/></svg></button>
<button aria-label="Interactive cells"><svg><path d="m2 7 4-5h10v9l-4 5H2z" fill="#c8c8c8" stroke="#999"/><path d="M2 7h10v9M12 7l4-5" fill="none" stroke="#999"/><use href="#ptr"/></svg></button>
<button aria-label="Hover point"><svg><circle cx="8" cy="9" r="2.500" fill="#ddd" stroke="#aaa"/><path d="m10 11 5 5" stroke="#aaa" stroke-width="2"/></svg></button>
<button aria-label="Interactive select cell"><svg><path d="m8 4 6 9H2z" fill="#8fcb6c" stroke="#6f8f5a"/><use href="#ptr"/></svg></button>
<button aria-label="Interactive select point"><svg><path d="m8 3 5 9H2z" fill="none" stroke="#bbb"/><g fill="#c8402c"><circle cx="8" cy="3" r="1.600"/><circle cx="3" cy="12" r="1.600"/></g><use href="#ptr"/></svg></button>
<button aria-label="Query cell"><svg><path d="m6 8 5 8H1z" fill="#8fcb6c" stroke="#6f8f5a"/><path d="M10 4c0-4 6-3 6 0 0 2-3 2-3 6M13 12v2" fill="none" stroke="#75755f" stroke-width="1.700"/></svg></button>
<button aria-label="Query point"><svg><circle cx="5" cy="13" r="2.500" fill="#d8402c" stroke="#7a5a50" stroke-width=".6"/><path d="M9 4c0-4 6-3 6 0 0 2-3 2-3 6M12 12v2" fill="none" stroke="#75755f" stroke-width="1.700"/></svg></button>
<button aria-label="Grow selection"><svg><path d="M2 9h14M9 2v14" stroke="#a5a5a5" stroke-width="4.500"/></svg></button>
<button aria-label="Shrink selection"><svg><path d="M2 9h14" stroke="#a5a5a5" stroke-width="4.500"/></svg></button>
<button aria-label="Clear selection"><svg><path d="M3 4h12l-1 14H4z" fill="#b0b0b0"/><path d="M2 4q7-6 14 0z" fill="#888"/><path d="M6 6v11M9 6v11M12 6v11" stroke="#888"/></svg></button>
</div>
<div class="view">
<svg width="100%" height="100%">
<circle cx="516" cy="250" r="176" fill="#c8c5bc" stroke="#fff"/>
<g fill="none" stroke="#f4f3ef"><path d="M515.500 226.500h34q18 0 21 7 3 14 0 33-3 7-21 7h-34v-11h34q9 0 10-4 2-9 0-18-1-3-10-3h-34z"/><path d="M515.500 237.500l22-1v-10M515.500 262.500l22 1v10"/></g>
<path d="M515.500 239v22" stroke="#c8c5bc" stroke-width="3"/>
<path d="M63.500 438v-30" stroke="#d8d000"/><path d="m61 409 2.500-7 2.500 7z" fill="#e8e000"/><path d="M64 437h28" stroke="#f00"/><path d="m91 434 6 3-6 3z" fill="#f00"/><path d="M91 435v4" stroke="#300"/><circle cx="63.500" cy="437" r="3" fill="#006400"/>
<g class="axname"><text x="64" y="409">Y</text><text x="65" y="437">Z</text><text x="92" y="437">X</text></g>
</svg>
</div>
</div>
<div class="grip low"></div>
<div class="animtitle">Animation View</div>
<div class="anim">
<label for="mode">Mode:</label><span class="combo mode"><select id="mode"><option>Sequence</option></select></span>
<label class="t" for="at">Time:</label><input class="field" id="at" value="0.00">
<span class="spin"><input value="0" disabled aria-label="Frame"><i></i></span>
<span class="of">of (TDB)</span><label class="start" for="st">Start Time:</label><input class="field" id="st" value="0">
<button class="btn lock" aria-label="Lock start time"><svg viewBox="0 0 18 20"><path d="M4.500 10V6c0-6 9-6 9 0v4" fill="none" stroke="#7a8a6a" stroke-width="2"/><rect x="1" y="9" width="16" height="10" rx="1" fill="url(#lockfill)" stroke="#6c7a60"/></svg></button>
<label class="end" for="et">End Time:</label><input class="field" id="et" value="">
</div>
</section>
</main>
</body>
</html>
```
FILE: styles.css
```css
* { box-sizing: border-box; }
body {
  margin: 0;
  height: 100vh;
  overflow: hidden;
  display: flex;
  flex-direction: column;
  border-left: 1px solid #43506a;
  background: #efefef;
  color: #000;
  font: 12px/16px "Noto Sans", "Open Sans", sans-serif;
}
button, input, select { font: inherit; color: inherit; margin: 0; }
button { padding: 0; border: 0; background: none; }
i { display: block; flex: none; }
svg { display: block; flex: none; overflow: visible; }
.defs { position: absolute; width: 0; height: 0; }
.fade { filter: grayscale(1); opacity: .6; }
.redo { --f: #d0d0d0; filter: grayscale(1); }

.titlebar { height: 32px; flex: none; background: #fff; display: flex; align-items: center; gap: 5px; padding: 0 9px 5px; }
.titlebar h1 { margin: 0; font-weight: 400; font-size: 14px; line-height: 20px; }
.menubar { height: 22px; flex: none; display: flex; align-items: center; gap: 16px; padding: 2px 11px 0; border-bottom: 1px solid #d0d0d0; }
.menubar a { color: inherit; text-decoration: none; }

.toolbar { height: 45px; flex: none; display: flex; align-items: center; background: linear-gradient(#fafafa, #ededed); border-bottom: 1px solid #b9b9b9; overflow: hidden; }
.toolbar.wide { height: 44px; }
.tool { width: 38px; height: 36px; flex: none; display: flex; align-items: center; justify-content: center; position: relative; }
.wide .tool { width: 39px; }
.tool svg { width: 28px; height: 28px; }
.pressed { background: #dcdcdc; border: 1px solid #a8a8a8; border-radius: 3px; }
.drop::after { content: ""; position: absolute; right: 3px; bottom: 3px; border: 4px solid transparent; border-top: 5px solid #555; border-bottom: 0; }
.sep { width: 7px; height: 24px; background: linear-gradient(#d0d0d0, #d0d0d0) no-repeat center / 1px 100%; }
.handle { width: 15px; height: 17px; margin-left: 4px; padding: 0 5px; background: radial-gradient(circle, #b0b0b0 1px, transparent 1px) 5px 0 / 3px 3px content-box; }
.wide .handle { margin-left: 3px; }
.toolbar .handle:first-child { margin-left: 0; }
.badge { font: italic bold 16px "Liberation Sans", sans-serif; fill: #111; }
.badge.e { font-size: 26px; fill: #555; }
.ax { font-weight: 700; font-size: 11px; fill: #777; }
.yx { --u: #a5d28a; --s: #f5b91b; --b: #e03c31; }
.xy { --u: #a5d28a; --s: #e03c31; --b: #f5b91b; }
.xz { --u: #f5b91b; --s: #e03c31; --b: #a5d28a; }
.iris { --iris: #3a3a9a; }
.blue { --iris: #2a93d0; }

.field { height: 26px; border: 1px solid #b2b2b2; border-radius: 3px; background: #fff; padding: 0 2px; min-width: 0; }
.time { width: 36px; }
.timebox { width: 109px; margin-right: 2px; }
.spin { display: flex; border: 1px solid #b2b2b2; border-radius: 3px; height: 25px; overflow: hidden; background: #efefef; color: #888; width: 67px; flex: none; }
.spin input { flex: 1; min-width: 0; border: 0; background: none; padding: 0 4px; }
.spin i { width: 17px; border-left: 1px solid #b8b8b8; display: flex; flex-direction: column; gap: 5px; align-items: center; justify-content: center; background: #f5f5f5; }
.spin i::before, .spin i::after { content: ""; border: 4px solid transparent; border-bottom: 5px solid #b5b5b5; border-top: 0; }
.spin i::after { border-top: 5px solid #b5b5b5; border-bottom: 0; }
.spin.small { width: 38px; }

.combo { position: relative; display: block; height: 24px; min-width: 0; }
.combo select { appearance: none; display: block; width: 100%; height: 100%; border: 1px solid #a9a9a9; border-radius: 3px; background: linear-gradient(#fefefe, #eee); padding: 2px 20px 0 4px; }
.combo::after { content: ""; position: absolute; right: 10px; top: 50%; margin-top: -3px; border: 5px solid transparent; border-top-color: #505050; border-bottom: 0; pointer-events: none; }
.combo.off select { color: #808080; border-color: #c0c0c0; background: linear-gradient(#f6f6f6, #ececec); opacity: 1; }
.combo.off::after { border-top-color: #a8a8a8; }
.combo.big { height: 28px; }
.combo.dot select { padding-left: 28px; }
.combo.dot::before { content: ""; position: absolute; left: 8px; top: 7px; width: 14px; height: 14px; border-radius: 50%; background: #c47f3b; border: 1px solid #8d7a5c; }
.c-color { width: 150px; margin-right: 4px; }
.c-comp { width: 75px; }
.c-rep { width: 150px; }

.main { flex: 1; min-height: 0; display: flex; }
.side { width: 447px; flex: none; display: flex; flex-direction: column; min-height: 0; }
.docktitle { height: 20px; flex: none; display: flex; align-items: center; gap: 2px; padding: 2px 2px 0 4px; }
.docktitle span { flex: 1; }
.docktitle svg, .ltab button svg { width: 12px; height: 12px; }
.docktitle.second { height: 22px; }
.pipeline { margin: 0; padding: 0; list-style: none; height: 112px; flex: none; border: 1px solid #b5b5b5; background: #fff; }
.pipeline li { display: flex; height: 28px; align-items: center; }
.pipeline li + li { height: 26px; }
.vis { width: 37px; padding-left: 3px; }
.node { width: 16px; height: 28px; }
.name { padding: 4px 0 0 8px; }
.sel { display: flex; align-items: center; gap: 8px; height: 22px; padding: 0 7px 0 1px; background: #1582dc; color: #fff; }
.sel svg { width: 15px; height: 15px; }
.grip { height: 7px; flex: none; background: repeating-linear-gradient(90deg, #aaa 0 1px, transparent 1px 3px) center / 17px 1px no-repeat; }
.tabs { height: 30px; flex: none; display: flex; align-items: flex-end; border-bottom: 1px solid #b5b5b5; }
.tab { height: 27px; width: 95px; border: 1px solid #b5b5b5; border-bottom: 0; border-left: 0; border-radius: 3px 3px 0 0; background: #dedede; padding-top: 2px; }
.tab.on { height: 30px; width: 89px; margin-bottom: -1px; background: linear-gradient(#fcfcfc, #efefef); }

.btn { display: flex; align-items: center; justify-content: center; gap: 5px; height: 27px; min-width: 0; border: 1px solid #adadad; border-radius: 3px; background: linear-gradient(#fefefe, #ececec); }
.btn:disabled { color: #808080; border-color: #c0c0c0; background: linear-gradient(#f6f6f6, #ececec); }
.btn svg { width: 20px; height: 20px; }
.actions { display: grid; grid-template-columns: repeat(4, 1fr); gap: 2px; padding: 9px 11px 7px; }
.actions .btn { padding-top: 1px; }
.actions svg { width: 18px; height: 18px; }
.search { display: flex; gap: 2px; padding: 0 11px 7px; }
.search .field { flex: 1; }
.search .field::placeholder { color: #808080; opacity: 1; }
.search .btn { width: 28px; }
.scroll { flex: 1; min-height: 0; display: flex; padding: 0 11px; }
.form { flex: 1; min-width: 0; overflow: hidden; }
.section { display: grid; grid-template-columns: 1fr repeat(4, 33px); gap: 4px; }
.head { display: flex; align-items: center; gap: 8px; height: 27px; padding: 0 4px 0 12px; border: 1px solid #b5b5b5; background: #ededed; font-size: 13px; font-weight: 700; white-space: nowrap; overflow: hidden; min-width: 0; }
.head i { width: 14px; height: 5px; background: #2e8fc0; border: 1px solid #7d9aa8; }
.arrays { height: 111px; margin: 7px 0 4px; border: 1px solid #b5b5b5; background: #fff; }
.arow { display: flex; align-items: center; height: 22px; padding-left: 3px; gap: 6px; }
.arow > svg { width: 18px; height: 18px; }
.arow > svg + label { margin-left: 1px; }
.arow label { padding-top: 1px; }
.ahead { background: linear-gradient(#fefefe, #e8e8e8); border-bottom: 1px solid #b5b5b5; padding-right: 1px; }
.ahead label { flex: 1; }
.arow > svg:first-of-type { margin-left: 2px; }
.arow input { appearance: none; width: 16px; height: 16px; border: 1px solid #b5b5b5; background: #fff; display: grid; place-items: center; }
.arow input:checked::before { content: ""; width: 6px; height: 10px; border: solid #000; border-width: 0 2px 2px 0; transform: rotate(38deg) translate(-1px, -1px); }
.row { display: flex; margin-bottom: 7px; }
.row .combo { flex: 1; }
.ta label { width: 68px; padding-top: 1px; }
.row.rep { margin-bottom: 8px; padding-top: 7px; }
.rep label { width: 108px; }
h2 { margin: 0; height: 17px; border-bottom: 1px solid #999; font-size: 12px; line-height: 18px; }
.colorby { display: flex; gap: 4px; align-items: center; padding: 6px 37px 4px 0; }
.colorby .combo { flex: 1; }
.colorbtns { display: grid; grid-template-columns: 1fr repeat(7, 33px); gap: 4px; margin-bottom: 8px; }
.edit { padding-top: 1px; }
.vbar { width: 17px; flex: none; border-left: 1px solid #bcbcbc; background: #e4e4e4; display: flex; flex-direction: column; padding-bottom: 10px; }
.vbar button { height: 17px; border-bottom: 1px solid #b5b5b5; background: #f2f2f2; display: grid; place-items: center; flex: none; }
.vbar button::before { content: ""; border: 5px solid transparent; border-bottom-color: #505050; border-top: 0; }
.vbar i { flex: 1; border-bottom: 1px solid #b5b5b5; background: linear-gradient(90deg, #fff, #f0f0f0); }

.splitter { width: 7px; flex: none; background: repeating-linear-gradient(#aaa 0 1px, transparent 1px 3px) 4px 404px / 1px 17px no-repeat; }
.center { flex: 1; min-width: 0; display: flex; flex-direction: column; overflow: hidden; }
.ltabs { height: 30px; flex: none; display: flex; align-items: flex-end; }
.ltab { height: 27px; width: 38px; border: 1px solid #b5b5b5; border-left: 0; border-bottom: 0; border-radius: 3px 3px 0 0; background: #e8e8e8; padding-top: 4px; }
.ltab.on { height: 29px; width: 122px; border-left: 1px solid #b5b5b5; background: #fdfdfd; display: flex; align-items: center; gap: 4px; padding: 2px 0 0 14px; }
.pane { flex: 1; min-height: 0; display: flex; flex-direction: column; border: 1px solid #b5b5b5; border-right: 0; padding-left: 1px; }
.viewbar { height: 27px; flex: none; display: flex; align-items: center; overflow: hidden; }
.viewbar button { width: 26px; height: 26px; flex: none; display: grid; place-items: center; }
.viewbar svg { width: 18px; height: 18px; overflow: hidden; }
.viewbar .sep { height: 14px; }
.viewbar .two { font-weight: 700; font-size: 11px; color: #6c6c58; }
.view { flex: 1; min-height: 0; border: solid #00f; border-width: 2px 0 2px 2px; box-shadow: inset 1px 1px #fff, inset 0 -1px #fff; background: #52576e; overflow: hidden; }
.axname { font-size: 10px; fill: #fff; }
.grip.low { height: 10px; background-position: 513px 5px; }
.animtitle { padding: 2px 4px; height: 20px; }
.anim { display: flex; align-items: center; gap: 2px; height: 29px; padding: 0 0 1px 2px; white-space: nowrap; }
.anim > * { flex: none; }
.anim .mode { width: 144px; }
.anim .field { width: 107px; }
.anim .lock { width: 28px; }
.anim .t { width: 34px; }
.anim .of { width: 48px; }
.anim .start { width: 66px; }
.anim .end { width: 60px; }
```
